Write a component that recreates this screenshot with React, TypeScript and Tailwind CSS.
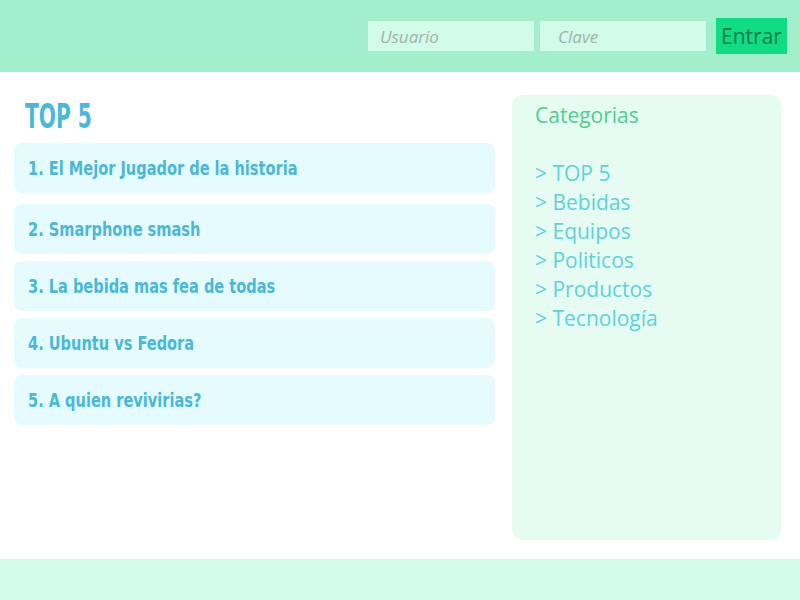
import React from 'react';

const posts = [
  '1. El Mejor Jugador de la historia',
  '2. Smarphone smash',
  '3. La bebida mas fea de todas',
  '4. Ubuntu vs Fedora',
  '5. A quien revivirias?',
];

const categories = ['TOP 5', 'Bebidas', 'Equipos', 'Politicos', 'Productos', 'Tecnología'];

const condensed = "font-['Liberation_Sans_Narrow','DejaVu_Sans_Condensed',sans-serif]";

export default function App() {
  return (
    <div className="w-[800px] h-[600px] flex flex-col bg-white font-['Open_Sans',sans-serif]">
      {/* Header */}
      <header className="h-[72px] bg-[#a3eecb] flex items-center justify-end pr-[13px]">
        <input
          placeholder="Usuario"
          className="w-[166px] h-[30px] bg-[#d3fbe9] pl-3 text-[17px] italic placeholder:text-[#9bb5a9] outline-none"
        />
        <input
          placeholder="Clave"
          className="ml-[6px] w-[166px] h-[30px] bg-[#d3fbe9] pl-[18px] text-[17px] italic placeholder:text-[#9bb5a9] outline-none"
        />
        <button
          type="button"
          className="ml-[10px] w-[71px] h-[36px] bg-[#10dc84] text-[#137a4a] text-[21px] leading-none"
        >
          Entrar
        </button>
      </header>

      {/* Body */}
      <main className="flex-1 flex pt-[23px] pb-[19px] pl-[14px] pr-[19px] gap-[17px]">
        <section className="w-[481px] flex flex-col">
          <h1 className={`${condensed} font-bold text-[34px] leading-none text-[#4ab8d8] pl-[11px] pt-[4px] h-[48px]`}>
            <span className="inline-block origin-left scale-x-[0.66]">TOP 5</span>
          </h1>
          <div className="flex flex-col gap-[7px]">
            {posts.map((p, i) => (
              <div
                key={p}
                className={`${condensed} ${i === 0 ? 'mb-[4px]' : ''} h-[50px] rounded-[8px] bg-[#e6fbfd] flex items-center pl-[14px] text-[20px] font-bold text-[#4ab8d8]`}
              >
                <span className="inline-block origin-left scale-x-[0.81] whitespace-nowrap">{p}</span>
              </div>
            ))}
          </div>
        </section>

        <aside className="flex-1 rounded-[10px] bg-[#e6fcf3] pl-[23px] pt-[5px]">
          <h2 className="text-[21px] text-[#4cd18c]">Categorias</h2>
          <ul className="mt-[27px] text-[21px] leading-[29px] text-[#5cd3d8]">
            {categories.map((c) => (
              <li key={c}>&gt; {c}</li>
            ))}
          </ul>
        </aside>
      </main>

      <footer className="h-[41px] bg-[#d3fbea]" />
    </div>
  );
}
